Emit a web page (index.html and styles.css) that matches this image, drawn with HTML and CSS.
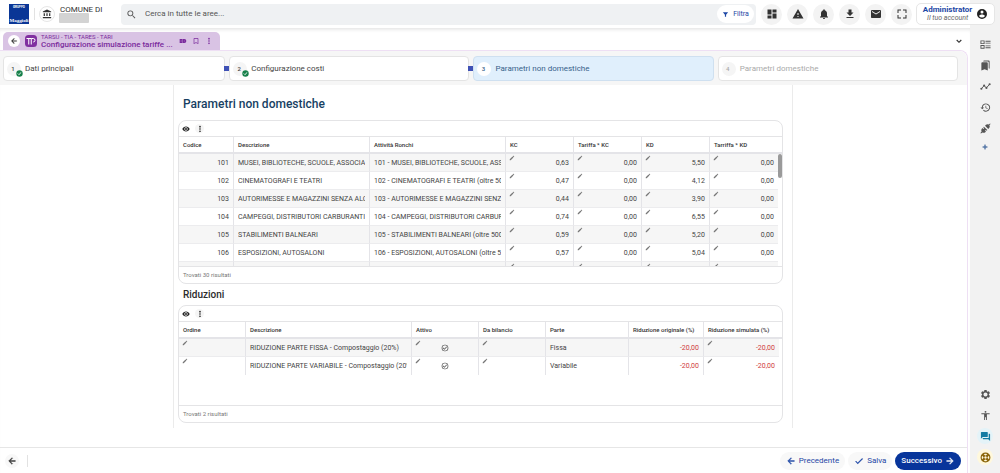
FILE: index.html
```html
<!DOCTYPE html>
<html lang="it">
<head>
<meta charset="utf-8">
<meta name="viewport" content="width=device-width, initial-scale=1">
<title>Configurazione simulazione tariffe</title>
<link rel="stylesheet" href="styles.css">
</head>
<body>
<svg class="sprite" aria-hidden="true">
  <symbol id="bank" viewBox="0 0 24 24"><path d="M4 10v7h3v-7zm6.500 0v7h3v-7zM2 22h20v-3H2zm15-12v7h3v-7zM12 1 2 6v2h20V6z"/></symbol>
  <symbol id="search" viewBox="0 0 24 24"><path d="M15.500 14h-.79l-.28-.27A6.470 6.470 0 0 0 16 9.500 6.500 6.500 0 1 0 9.500 16c1.610 0 3.090-.59 4.230-1.570l.27.28v.79l5 4.990L20.490 19zm-6 0C7.010 14 5 11.990 5 9.500S7.010 5 9.500 5 14 7.010 14 9.500 11.990 14 9.500 14"/></symbol>
  <symbol id="filter" viewBox="0 0 24 24"><path d="M3 4h18l-7 9v7h-4v-7z"/></symbol>
  <symbol id="dashboard" viewBox="0 0 24 24"><path d="M3 13h8V3H3zm0 8h8v-6H3zm10 0h8V11h-8zm0-18v6h8V3z"/></symbol>
  <symbol id="warning" viewBox="0 0 24 24"><path d="M1 21h22L12 2zm12-3h-2v-2h2zm0-4h-2v-4h2z"/></symbol>
  <symbol id="bell" viewBox="0 0 24 24"><path d="M12 22c1.100 0 2-.9 2-2h-4c0 1.100.890 2 2 2m6-6v-5c0-3.070-1.640-5.640-4.500-6.320V4a1.500 1.500 0 0 0-3 0v.68C7.630 5.360 6 7.920 6 11v5l-2 2v1h16v-1z"/></symbol>
  <symbol id="download" viewBox="0 0 24 24"><path d="M19 9h-4V3H9v6H5l7 7zM5 18v2h14v-2z"/></symbol>
  <symbol id="mail" viewBox="0 0 24 24"><path d="M20 4H4a2 2 0 0 0-2 2v12c0 1.100.9 2 2 2h16a2 2 0 0 0 2-2V6a2 2 0 0 0-2-2m0 4-8 5-8-5V6l8 5 8-5z"/></symbol>
  <symbol id="fullscreen" viewBox="0 0 24 24"><path d="M5 5h5V3H3v7h2zm9-2v2h5v5h2V3zm5 16h-5v2h7v-7h-2zM5 14H3v7h7v-2H5z"/></symbol>
  <symbol id="account" viewBox="0 0 24 24"><path d="M12 2a10 10 0 1 0 0 20 10 10 0 0 0 0-20m0 3a3 3 0 1 1 0 6 3 3 0 0 1 0-6m0 14.200a7.200 7.200 0 0 1-6-3.220c.03-1.990 4-3.080 6-3.080s5.970 1.090 6 3.080a7.200 7.200 0 0 1-6 3.220"/></symbol>
  <symbol id="left" viewBox="0 0 24 24"><path d="M20 11H7.830l5.590-5.590L12 4l-8 8 8 8 1.410-1.410L7.830 13H20z" stroke="currentColor"/></symbol>
  <symbol id="right" viewBox="0 0 24 24"><path d="m12 4-1.410 1.410L16.170 11H4v2h12.170l-5.580 5.590L12 20l8-8z" stroke="currentColor"/></symbol>
  <symbol id="more" viewBox="0 0 24 24"><path d="M12 7.500a2.500 2.500 0 1 0 0-5 2.500 2.500 0 0 0 0 5m0 2a2.500 2.500 0 1 0 0 5 2.500 2.500 0 0 0 0-5m0 7a2.500 2.500 0 1 0 0 5 2.500 2.500 0 0 0 0-5"/></symbol>
  <symbol id="bookmark" viewBox="0 0 24 24"><path d="M17 3H7a2 2 0 0 0-2 2v16l7-3 7 3V5a2 2 0 0 0-2-2m0 15-5-2.180L7 18V5h10z"/></symbol>
  <symbol id="pair" viewBox="0 0 24 24"><path fill-rule="evenodd" d="M2 6h9v12H2zm10 0h4a6 6 0 0 1 0 12h-4zm3 5v2h2v-2zM5 11v2h3v-2z"/></symbol>
  <symbol id="down" viewBox="0 0 24 24"><path d="M7.400 8.600 12 13.200l4.600-4.600L18.500 10.500 12 17 5.500 10.500z"/></symbol>
  <symbol id="done" viewBox="0 0 24 24"><circle cx="12" cy="12" r="11"/><path d="m6 12 4 4 8-8" fill="none" stroke="#fff" stroke-width="3"/></symbol>
  <symbol id="eye" viewBox="0 0 24 24"><path d="M12 4.500C7 4.500 2.730 7.610 1 12c1.730 4.390 6 7.500 11 7.500s9.270-3.110 11-7.500c-1.730-4.390-6-7.500-11-7.500M12 17a5 5 0 1 1 0-10 5 5 0 0 1 0 10m0-8a3 3 0 1 0 0 6 3 3 0 0 0 0-6"/></symbol>
  <symbol id="pencil" viewBox="0 0 24 24"><path d="M3 17.250V21h3.750L17.810 9.940l-3.750-3.750zM20.710 7.040a1 1 0 0 0 0-1.410l-2.340-2.340a1 1 0 0 0-1.410 0l-1.830 1.830 3.750 3.750z"/></symbol>
  <symbol id="tick" viewBox="0 0 24 24"><path d="M16.590 7.580 10 14.170l-3.590-3.580L5 12l5 5 8-8zM12 2a10 10 0 1 0 0 20 10 10 0 0 0 0-20m0 18a8 8 0 1 1 0-16 8 8 0 0 1 0 16"/></symbol>
  <symbol id="check" viewBox="0 0 24 24"><path d="M9 16.170 4.830 12l-1.420 1.410L9 19 21 7l-1.410-1.410z" stroke="currentColor" stroke-width=".8"/></symbol>
  <symbol id="ballot" viewBox="0 0 24 24"><path fill-rule="evenodd" d="M1 3h9v8H1zm2 2v4h5V5zM1 13h9v8H1zm2 2v4h5v-4zM12 4h11v2H12zm0 4h11v2H12zm0 6h11v2H12zm0 4h11v2H12z"/></symbol>
  <symbol id="bookmarks" viewBox="0 0 24 24"><path d="m19 18 2 1V3a2 2 0 0 0-2-2H8.990A2 2 0 0 0 7 3h10a2 2 0 0 1 2 2zM15 5H5a2 2 0 0 0-2 2v16l7-3 7 3V7a2 2 0 0 0-2-2"/></symbol>
  <symbol id="timeline" viewBox="0 0 24 24"><path d="M3 17 9 10l5 5 7-8" fill="none" stroke="currentColor" stroke-width="2"/><circle cx="3" cy="17" r="2.300"/><circle cx="9" cy="10" r="2.300"/><circle cx="14" cy="15" r="2.300"/><circle cx="21" cy="7" r="2.300"/></symbol>
  <symbol id="history" viewBox="0 0 24 24"><path d="M13 3a9 9 0 0 0-9 9H1l3.890 3.890.07.14L9 12H6a7 7 0 1 1 2.060 4.940l-1.420 1.420A9 9 0 1 0 13 3m-1 5v5l4.280 2.540.72-1.210-3.500-2.080V8z"/></symbol>
  <symbol id="plug" viewBox="0 0 24 24"><path d="m23 2-1-1-3 2.500a5 5 0 0 0-6 .5l-2 2 7 7 2-2a5 5 0 0 0 .5-6zM8.500 8 7 9.500l2 2L7.500 13l-2-2L4 12.500a5 5 0 0 0-.5 6L1 22l1 1 3.500-2.500a5 5 0 0 0 6-.5l1.500-1.500-2-2 1.500-1.500 2 2L16 15.500z"/></symbol>
  <symbol id="plus" viewBox="0 0 24 24"><path d="M21 13h-8v8h-2v-8H3v-2h8V3h2v8h8z" stroke="currentColor" stroke-width="1.500"/></symbol>
  <symbol id="gear" viewBox="0 0 24 24"><path d="M19.430 12.980c.04-.32.07-.64.07-.98s-.03-.66-.07-.98l2.110-1.650a.5.500 0 0 0 .12-.64l-2-3.460a.5.500 0 0 0-.61-.22l-2.490 1a7.300 7.300 0 0 0-1.690-.98l-.38-2.650A.49.490 0 0 0 14 2h-4a.49.490 0 0 0-.49.420l-.38 2.650c-.61.250-1.170.590-1.690.98l-2.490-1a.5.500 0 0 0-.61.220l-2 3.460a.5.500 0 0 0 .12.640l2.110 1.650a8 8 0 0 0 0 1.960l-2.110 1.650a.5.500 0 0 0-.12.640l2 3.460c.12.220.390.300.610.220l2.490-1c.52.400 1.080.730 1.690.98l.38 2.650c.03.240.240.420.490.420h4c.25 0 .46-.18.49-.42l.38-2.650c.61-.25 1.170-.59 1.690-.98l2.490 1c.23.090.490 0 .61-.22l2-3.460a.5.500 0 0 0-.12-.64zM12 16.500a4.500 4.500 0 1 1 0-9 4.500 4.500 0 0 1 0 9"/></symbol>
  <symbol id="person" viewBox="0 0 24 24"><path d="M12 2a2 2 0 1 1 0 4 2 2 0 0 1 0-4m9 7h-6v13h-2v-6h-2v6H9V9H3V7h18z"/></symbol>
  <symbol id="chat" viewBox="0 0 24 24"><path d="M21 6h-2v9H6v2a1 1 0 0 0 1 1h11l4 4V7a1 1 0 0 0-1-1m-4 6V3a1 1 0 0 0-1-1H3a1 1 0 0 0-1 1v14l4-4h10a1 1 0 0 0 1-1"/></symbol>
  <symbol id="support" viewBox="0 0 24 24"><g fill="none" stroke="currentColor"><circle cx="12" cy="12" r="9.500" stroke-width="2.500"/><circle cx="12" cy="12" r="3.500" stroke-width="2"/><path d="m5 5 4.500 4.500M19 5l-4.500 4.500M5 19l4.500-4.500M19 19l-4.500-4.500" stroke-width="5"/></g></symbol>
</svg>

<div class="app">
  <header class="topbar">
    <svg class="logo" viewBox="0 0 20 20" role="img" aria-label="Gruppo Maggioli">
      <rect width="20" height="20" fill="#0a3696"/>
      <text class="logo-top" x="10" y="4" text-anchor="middle">GRUPPO</text>
      <text class="logo-name" x="10" y="18" text-anchor="middle">Maggioli</text>
    </svg>
    <span class="divider"></span>
    <button class="round small" aria-label="Ente"><svg><use href="#bank"/></svg></button>
    <div class="entity"><span>COMUNE DI</span><span class="masked"></span></div>
    <div class="search">
      <svg><use href="#search"/></svg>
      <input type="search" aria-label="Cerca" placeholder="Cerca in tutte le aree...">
      <button class="filter"><svg><use href="#filter"/></svg>Filtra</button>
    </div>
    <nav class="tools" aria-label="Strumenti">
      <button class="round" aria-label="Cruscotto"><svg><use href="#dashboard"/></svg></button>
      <button class="round" aria-label="Avvisi"><svg><use href="#warning"/></svg></button>
      <button class="round" aria-label="Notifiche"><svg><use href="#bell"/></svg></button>
      <button class="round" aria-label="Download"><svg><use href="#download"/></svg></button>
      <button class="round" aria-label="Messaggi"><svg><use href="#mail"/></svg></button>
      <button class="round" aria-label="Schermo intero"><svg><use href="#fullscreen"/></svg></button>
    </nav>
    <button class="account">
      <span class="who"><strong>Administrator</strong><em>Il tuo account</em></span>
      <svg><use href="#account"/></svg>
    </button>
  </header>

  <main class="workspace">
    <div class="tabs">
      <div class="tab">
        <button class="back" aria-label="Indietro"><svg><use href="#left"/></svg></button>
        <svg class="module" viewBox="0 0 24 24"><rect width="24" height="24" rx="7" fill="#8030a0"/><path d="M3 7h9M7.500 7v12M12.500 19V7h4a3.500 3.500 0 0 1 0 7" fill="none" stroke="#fff" stroke-width="2"/></svg>
        <div class="tab-text"><small>TARSU - TIA - TARES - TARI</small><strong>Configurazione simulazione tariffe ...</strong></div>
        <button class="plain" aria-label="Affianca"><svg><use href="#pair"/></svg></button>
        <button class="plain" aria-label="Segnalibro"><svg><use href="#bookmark"/></svg></button>
        <button class="plain" aria-label="Altro"><svg><use href="#more"/></svg></button>
      </div>
      <button class="plain expand" aria-label="Espandi"><svg><use href="#down"/></svg></button>
    </div>

    <div class="panel">
      <ol class="steps">
        <li class="step"><span class="num">1<svg><use href="#done"/></svg></span>Dati principali</li>
        <li class="step"><span class="num">2<svg><use href="#done"/></svg></span>Configurazione costi</li>
        <li class="step current"><span class="num">3</span>Parametri non domestiche</li>
        <li class="step disabled"><span class="num">4</span>Parametri domestiche</li>
      </ol>

      <div class="scroll">
        <div class="sheet">
          <h1>Parametri non domestiche</h1>
          <section class="card">
            <div class="card-tools"><button class="plain" aria-label="Colonne"><svg><use href="#eye"/></svg></button><button class="dots" aria-label="Altro"><svg><use href="#more"/></svg></button></div>
            <div class="grid">
              <table class="rates">
                <colgroup><col class="code"><col class="wide"><col class="wide"><col class="value"><col class="value"><col class="value"><col class="value"><col class="gutter"></colgroup>
                <thead><tr><th>Codice</th><th>Descrizione</th><th>Attività Ronchi</th><th>KC</th><th>Tariffa * KC</th><th>KD</th><th class="last">Tarriffa * KD</th><th class="end"></th></tr></thead>
                <tbody>
                  <tr><td class="n">101</td><td><div class="clip">MUSEI, BIBLIOTECHE, SCUOLE, ASSOCIA</div></td><td><div class="clip">101 - MUSEI, BIBLIOTECHE, SCUOLE, ASS</div></td><td class="n e"><svg><use href="#pencil"/></svg>0,63</td><td class="n e"><svg><use href="#pencil"/></svg>0,00</td><td class="n e"><svg><use href="#pencil"/></svg>5,50</td><td class="n e last"><svg><use href="#pencil"/></svg>0,00</td><td class="end"></td></tr>
                  <tr><td class="n">102</td><td><div class="clip">CINEMATOGRAFI E TEATRI</div></td><td><div class="clip">102 - CINEMATOGRAFI E TEATRI (oltre 50</div></td><td class="n e"><svg><use href="#pencil"/></svg>0,47</td><td class="n e"><svg><use href="#pencil"/></svg>0,00</td><td class="n e"><svg><use href="#pencil"/></svg>4,12</td><td class="n e last"><svg><use href="#pencil"/></svg>0,00</td><td class="end"></td></tr>
                  <tr><td class="n">103</td><td><div class="clip">AUTORIMESSE E MAGAZZINI SENZA ALC</div></td><td><div class="clip">103 - AUTORIMESSE E MAGAZZINI SENZ</div></td><td class="n e"><svg><use href="#pencil"/></svg>0,44</td><td class="n e"><svg><use href="#pencil"/></svg>0,00</td><td class="n e"><svg><use href="#pencil"/></svg>3,90</td><td class="n e last"><svg><use href="#pencil"/></svg>0,00</td><td class="end"></td></tr>
                  <tr><td class="n">104</td><td><div class="clip">CAMPEGGI, DISTRIBUTORI CARBURANTI</div></td><td><div class="clip">104 - CAMPEGGI, DISTRIBUTORI CARBUR</div></td><td class="n e"><svg><use href="#pencil"/></svg>0,74</td><td class="n e"><svg><use href="#pencil"/></svg>0,00</td><td class="n e"><svg><use href="#pencil"/></svg>6,55</td><td class="n e last"><svg><use href="#pencil"/></svg>0,00</td><td class="end"></td></tr>
                  <tr><td class="n">105</td><td><div class="clip">STABILIMENTI BALNEARI</div></td><td><div class="clip">105 - STABILIMENTI BALNEARI (oltre 500</div></td><td class="n e"><svg><use href="#pencil"/></svg>0,59</td><td class="n e"><svg><use href="#pencil"/></svg>0,00</td><td class="n e"><svg><use href="#pencil"/></svg>5,20</td><td class="n e last"><svg><use href="#pencil"/></svg>0,00</td><td class="end"></td></tr>
                  <tr><td class="n">106</td><td><div class="clip">ESPOSIZIONI, AUTOSALONI</div></td><td><div class="clip">106 - ESPOSIZIONI, AUTOSALONI (oltre 5</div></td><td class="n e"><svg><use href="#pencil"/></svg>0,57</td><td class="n e"><svg><use href="#pencil"/></svg>0,00</td><td class="n e"><svg><use href="#pencil"/></svg>5,04</td><td class="n e last"><svg><use href="#pencil"/></svg>0,00</td><td class="end"></td></tr>
                  <tr><td></td><td></td><td></td><td class="n e"><svg><use href="#pencil"/></svg></td><td class="n e"><svg><use href="#pencil"/></svg></td><td class="n e"><svg><use href="#pencil"/></svg></td><td class="n e last"><svg><use href="#pencil"/></svg></td><td class="end"></td></tr>
                </tbody>
              </table>
              <span class="thumb"></span>
            </div>
            <footer class="count">Trovati 30 risultati</footer>
          </section>

          <h2>Riduzioni</h2>
          <section class="card">
            <div class="card-tools"><button class="plain" aria-label="Colonne"><svg><use href="#eye"/></svg></button><button class="dots" aria-label="Altro"><svg><use href="#more"/></svg></button></div>
            <div class="grid short">
              <table class="cuts">
                <colgroup><col class="order"><col class="desc"><col class="order"><col class="order"><col class="part"><col class="perc"><col class="perc"><col class="gutter"></colgroup>
                <thead><tr><th>Ordine</th><th>Descrizione</th><th>Attivo</th><th>Da bilancio</th><th>Parte</th><th>Riduzione originale (%)</th><th class="last">Riduzione simulata (%)</th><th class="end"></th></tr></thead>
                <tbody>
                  <tr><td class="e"><svg><use href="#pencil"/></svg></td><td><div class="clip">RIDUZIONE PARTE FISSA - Compostaggio (20%)</div></td><td class="e c"><svg><use href="#pencil"/></svg><svg class="yes" role="img" aria-label="Attivo"><use href="#tick"/></svg></td><td class="e"><svg><use href="#pencil"/></svg></td><td>Fissa</td><td class="n neg">-20,00</td><td class="n e neg last"><svg><use href="#pencil"/></svg>-20,00</td><td class="end"></td></tr>
                  <tr><td class="e"><svg><use href="#pencil"/></svg></td><td><div class="clip">RIDUZIONE PARTE VARIABILE - Compostaggio (20%)</div></td><td class="e c"><svg><use href="#pencil"/></svg><svg class="yes" role="img" aria-label="Attivo"><use href="#tick"/></svg></td><td class="e"><svg><use href="#pencil"/></svg></td><td>Variabile</td><td class="n neg">-20,00</td><td class="n e neg last"><svg><use href="#pencil"/></svg>-20,00</td><td class="end"></td></tr>
                </tbody>
              </table>
            </div>
            <footer class="count">Trovati 2 risultati</footer>
          </section>
        </div>
      </div>

      <footer class="actions">
        <button class="back" aria-label="Indietro"><svg><use href="#left"/></svg></button>
        <span class="divider"></span>
        <button class="pill push"><svg><use href="#left"/></svg>Precedente</button>
        <button class="pill"><svg><use href="#check"/></svg>Salva</button>
        <button class="pill primary">Successivo<svg><use href="#right"/></svg></button>
      </footer>
    </div>
  </main>

  <aside class="rail">
    <button aria-label="Riepilogo"><svg><use href="#ballot"/></svg></button>
    <button aria-label="Segnalibri"><svg><use href="#bookmarks"/></svg></button>
    <button aria-label="Andamento"><svg><use href="#timeline"/></svg></button>
    <button aria-label="Cronologia"><svg><use href="#history"/></svg></button>
    <button aria-label="Collegamenti"><svg><use href="#plug"/></svg></button>
    <button class="add" aria-label="Aggiungi"><svg><use href="#plus"/></svg></button>
    <button class="push-down" aria-label="Impostazioni"><svg><use href="#gear"/></svg></button>
    <button aria-label="Accessibilità"><svg><use href="#person"/></svg></button>
    <button class="chat" aria-label="Chat"><svg><use href="#chat"/></svg></button>
    <button class="help" aria-label="Assistenza"><svg><use href="#support"/></svg></button>
  </aside>
</div>
</body>
</html>
```
FILE: styles.css
```css
* { box-sizing: border-box; }

body {
  margin: 0;
  font-family: Roboto, "Liberation Sans", sans-serif;
  font-size: 7px;
  color: #444;
  background: #fff;
}

button {
  display: flex;
  align-items: center;
  justify-content: center;
  flex: none;
  padding: 0;
  border: 0;
  background: none;
  color: inherit;
  font: inherit;
}

svg { width: 10px; height: 10px; flex: none; fill: currentColor; }
.sprite { position: absolute; width: 0; height: 0; }

.app {
  display: grid;
  grid-template-columns: 1fr 30px;
  grid-template-rows: 28px 1fr;
  height: 100vh;
}

/* Top bar */
.topbar {
  grid-column: 1 / 3;
  grid-row: 1;
  z-index: 2;
  display: flex;
  align-items: center;
  padding: 0 5px 0 9px;
}
.logo { width: 20px; height: 20px; }
.logo-top { font-size: 3px; font-weight: 700; fill: #fff; }
.logo-name { font: 700 5px "Liberation Serif", serif; fill: #fff; }
.divider { width: 1px; height: 12px; background: #e2e2e2; margin: 0 4px 0 5px; }
.round { width: 21px; height: 21px; border-radius: 50%; background: #f3f3f3; color: #333; }
.round svg { width: 12px; height: 12px; }
.round.small { width: 16px; height: 16px; background: #fff; border: 1px solid #e6e6e6; }
.round.small svg { width: 10px; height: 10px; }
.entity { display: grid; width: 66px; padding-left: 5px; font-size: 8px; line-height: 10px; color: #333; }
.masked { width: 30px; height: 10px; margin-left: -1px; margin-top: -2px; border-radius: 1px; background: #d3d3d3; }
.search {
  flex: 1;
  display: flex;
  align-items: center;
  height: 21px;
  padding: 0 2px 0 5px;
  border-radius: 4px;
  background: #eff1f3;
}
.search svg { width: 11px; height: 11px; color: #555; }
.search input {
  flex: 1;
  min-width: 0;
  margin-left: 8px;
  padding: 0;
  border: 0;
  background: none;
  font: 8px/12px Roboto, sans-serif;
}
.search input::placeholder { color: #555; opacity: 1; }
.search .filter { width: 37px; height: 18px; gap: 4px; border-radius: 9px; background: #fff; color: #1d47a5; }
.search .filter svg { width: 7px; height: 7px; color: #1d47a5; }
.tools { display: flex; gap: 5px; padding: 0 4px 0 5px; }
.account {
  width: 79px;
  height: 22px;
  gap: 4px;
  border: 1px solid #e6e6e6;
  border-radius: 5px;
  background: #fff;
  color: #222;
}
.account svg { width: 12px; height: 12px; }
.who { display: grid; text-align: right; line-height: 8px; }
.who strong { font-size: 8px; font-weight: 700; color: #1d47a5; }
.who em { color: #666; padding-right: 4px; }

/* Workspace */
.workspace {
  grid-column: 1;
  grid-row: 2;
  min-width: 0;
  min-height: 0;
  display: flex;
  flex-direction: column;
  padding: 0 2px 0 0;
  box-shadow: inset 0 4px 4px -3px #ddd;
}
.tabs { display: flex; justify-content: space-between; align-items: flex-end; padding: 4px 4px 0 3px; }
.tab {
  display: flex;
  align-items: center;
  width: 217px;
  height: 18px;
  padding: 0 5px;
  border-radius: 5px 5px 0 0;
  background: #d9c3e4;
  color: #7a2a9c;
}
.back { width: 12px; height: 12px; border-radius: 50%; background: #fff; color: #333; }
.back svg { width: 8px; height: 8px; }
.module { width: 12px; height: 12px; margin: 0 4px 0 5px; }
.tab-text { display: grid; flex: 1; }
.tab-text small { font-size: 6px; line-height: 8px; }
.tab-text strong { font-size: 8px; line-height: 8px; font-weight: 500; white-space: nowrap; }
.tab .plain { width: 13px; }
.tab .plain svg { width: 8px; height: 8px; }
.expand { width: 10px; height: 18px; color: #333; }

.panel {
  flex: 1;
  min-height: 0;
  display: flex;
  flex-direction: column;
  border: 1px solid #eedff4;
  border-width: 1px 1px 0 0;
  border-radius: 0 8px 0 0;
}
.steps {
  display: grid;
  grid-template-columns: 222fr 240fr 240fr 240fr;
  gap: 4px;
  margin: 0;
  padding: 5px 9px 4px 3px;
  border-radius: 0 8px 0 0;
  background: #f6f6f6;
  list-style: none;
}
.step {
  position: relative;
  display: flex;
  align-items: center;
  gap: 4px;
  height: 25px;
  padding-left: 3px;
  border: 1px solid #e4e4e4;
  border-radius: 4px;
  background: #fff;
  font-size: 8px;
  color: #444;
}
/* Connector towards the following step */
.step:nth-child(-n+2)::after {
  content: "";
  position: absolute;
  right: -5px;
  top: 9px;
  width: 5px;
  height: 5px;
  background: #3f51b5;
}
.num {
  position: relative;
  width: 14px;
  height: 14px;
  padding-right: 2px;
  border-radius: 50%;
  background: #f5f5f5;
  font-size: 6px;
  font-weight: 500;
  line-height: 14px;
  text-align: center;
}
.num svg { position: absolute; right: -2px; bottom: -1px; width: 7px; height: 7px; color: #16804a; }
.current { background: #e0effc; border-color: #cfe0f0; color: #37618a; }
.current .num { background: #fff; }
.disabled { color: #aaa; }

/* Form sheet */
.scroll { flex: 1; min-height: 0; overflow: hidden; padding: 0 174px 0 173px; }
.sheet { border: 1px solid #ebebeb; border-width: 0 1px; padding: 11px 9px 5px 4px; }
h1, h2 { margin: 0; padding-left: 5px; font-weight: 500; }
h1 { padding-bottom: 8px; font-size: 12px; line-height: 16px; color: #173f63; }
h2 { padding: 5px 0 4px 5px; font-size: 10px; line-height: 12px; color: #2b2b2b; }
.card { border: 1px solid #e4e4e6; border-radius: 8px; overflow: hidden; }
.card-tools { display: flex; align-items: center; gap: 5px; height: 15px; padding-left: 3px; color: #222; }
.card-tools svg { width: 8px; height: 8px; }
.dots { width: 9px; height: 9px; border-radius: 50%; background: #f5f5f5; }
.grid { position: relative; height: 131px; overflow: hidden; border: 1px solid #e4e4e6; border-width: 1px 0; }
.grid.short { height: 85px; }
.count { padding-left: 4px; font-size: 6px; line-height: 16px; color: #777; }
.thumb { position: absolute; right: 0; top: 17px; width: 4px; height: 24px; border-radius: 2px; background: #9a9a9a; }

/* Column widths are base shares: the fixed layout spreads any spare width over them */
table { width: 100%; table-layout: fixed; border-collapse: separate; border-spacing: 0; }
.code { width: 55px; }
.wide { width: 136px; }
.value { width: 68px; }
.gutter { width: 4px; }
.order { width: 67px; }
.desc { width: 166px; }
.part { width: 83px; }
.perc { width: 75px; }
th {
  height: 17px;
  padding: 0 4px;
  border-right: 1px solid #e4e4e8;
  border-bottom: 2px solid #e4e4e8;
  font-size: 6px;
  font-weight: 500;
  color: #333;
  text-align: left;
  white-space: nowrap;
}
td {
  position: relative;
  height: 18px;
  padding: 0 4px;
  border-right: 1px solid #e4e4e8;
  border-bottom: 1px solid #ececee;
  line-height: 12px;
  white-space: nowrap;
}
.clip { overflow: hidden; }
tbody tr:nth-child(odd) td { background: #f6f6f6; }
th.last, td.last, th.end, td.end { border-right: 0; }
th.end, td.end { padding: 0; }
tbody tr:nth-child(odd) td.end { background: #fff; }
td.end { border-bottom: 0; }
.cuts tbody tr:last-child td { border-bottom: 0; }
.n { text-align: right; }
.c { text-align: center; }
.e > svg:first-child { position: absolute; left: 3px; top: 1px; width: 6px; height: 6px; color: #777; }
.yes { width: 8px; height: 8px; vertical-align: middle; }
.neg { color: #d03a3a; }

/* Action bar */
.actions {
  display: flex;
  align-items: center;
  gap: 3px;
  height: 26px;
  padding: 0 6px 0 5px;
  border-top: 1px solid #e6e6e6;
  color: #1d47a5;
}
.actions .back { width: 14px; height: 14px; background: #f8f8f8; }
.actions .back svg { width: 10px; height: 10px; }
.pill { height: 18px; gap: 3px; padding: 0 6px; border-radius: 9px; background: #f8f8f8; font-size: 8px; }
.pill.primary { background: #08359b; color: #fff; font-weight: 500; }
.push { margin-left: auto; }

/* Right rail */
.rail {
  grid-column: 2;
  grid-row: 1 / 3;
  display: flex;
  flex-direction: column;
  align-items: center;
  gap: 5px;
  padding: 36px 0 8px;
  background: #f2f2f2;
  color: #555;
}
.rail button { width: 16px; height: 16px; border-radius: 50%; }
.rail svg { width: 11px; height: 11px; }
.rail .add { height: 12px; }
.rail .add svg { width: 6px; height: 6px; }
.add { color: #24508f; }
.rail .push-down { margin-top: auto; }
.chat { color: #137ba3; background: #e4f3f8; }
.help { color: #8b6508; background: #fff8dc; }
```
